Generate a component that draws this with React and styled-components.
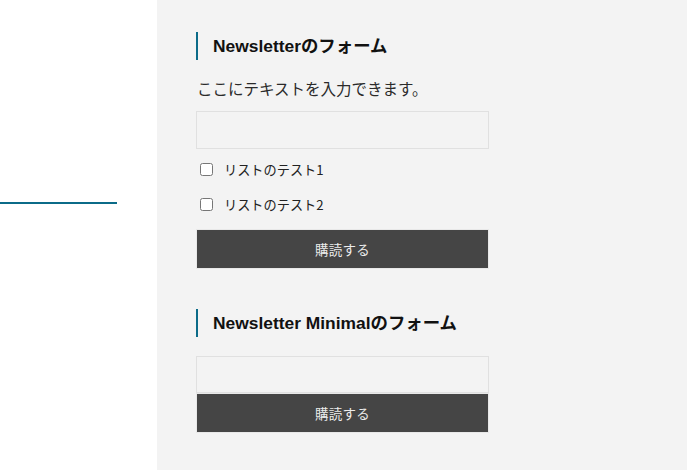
import React from "react";
import styled, { createGlobalStyle } from "styled-components";

const Global = createGlobalStyle`
  html, body { margin: 0; padding: 0; background: #ffffff; }
  body { font-family: "Liberation Sans", "Noto Sans CJK JP", sans-serif; }
`;

const Page = styled.div`
  display: flex;
  width: 687px;
  height: 470px;
  overflow: hidden;
`;

const Side = styled.aside`
  width: 157px;
  flex: none;
  background: #ffffff;
  padding-top: 202px;
  box-sizing: border-box;
`;

const SideLine = styled.div`
  width: 117px;
  height: 2px;
  background: #0b6b88;
`;

const Panel = styled.main`
  flex: 1;
  background: #f3f3f3;
  padding: 32px 0 0 39px;
  box-sizing: border-box;
`;

const Form = styled.section`
  width: 293px;
  display: flex;
  flex-direction: column;
  margin-top: ${(p) => p.$top || 0}px;
`;

const Heading = styled.h2`
  margin: 0;
  height: 28px;
  line-height: 28px;
  border-left: 2px solid #0b6b88;
  padding-left: 15px;
  font-size: 17.4px;
  font-weight: 700;
  color: #111111;
  white-space: nowrap;
  font-family: "Liberation Sans", "Noto Sans CJK JP", sans-serif;
`;

const Lead = styled.p`
  margin: 18px 0 0 1px;
  font-size: 15.5px;
  line-height: 20px;
  color: #2a2a2a;
  white-space: nowrap;
  font-family: "Noto Sans CJK JP", sans-serif;
`;

const Input = styled.input`
  box-sizing: border-box;
  width: 293px;
  height: ${(p) => p.$h}px;
  margin-top: ${(p) => p.$top}px;
  border: 1px solid #e0e0e0;
  background: #f3f3f3;
  outline: none;
  padding: 0 10px;
  font-size: 14px;
`;

const CheckRow = styled.label`
  display: flex;
  align-items: center;
  height: 20px;
  margin-top: ${(p) => p.$top}px;
  font-size: 13.2px;
  color: #222222;
  font-family: "Noto Sans CJK JP", sans-serif;
`;

const Box = styled.input`
  width: 13px;
  height: 13px;
  margin: 0 11px 0 4px;
`;

const Button = styled.button`
  box-sizing: border-box;
  width: 293px;
  height: 40px;
  margin-top: ${(p) => p.$top}px;
  border: 1px solid #e8e8e8;
  background: #454545;
  color: #ececec;
  font-size: 13.5px;
  letter-spacing: 0.3px;
  font-family: "Noto Sans CJK JP", sans-serif;
  cursor: pointer;
`;

export default function App() {
  return (
    <>
      <Global />
      <Page>
        <Side>
          <SideLine />
        </Side>
        <Panel>
          <Form>
            <Heading>Newsletterのフォーム</Heading>
            <Lead>ここにテキストを入力できます。</Lead>
            <Input $h={38} $top={13} />
            <CheckRow $top={10}>
              <Box type="checkbox" />
              リストのテスト1
            </CheckRow>
            <CheckRow $top={15}>
              <Box type="checkbox" />
              リストのテスト2
            </CheckRow>
            <Button $top={15}>購読する</Button>
          </Form>
          <Form $top={40}>
            <Heading>Newsletter Minimalのフォーム</Heading>
            <Input $h={37} $top={19} />
            <Button $top={0}>購読する</Button>
          </Form>
        </Panel>
      </Page>
    </>
  );
}
